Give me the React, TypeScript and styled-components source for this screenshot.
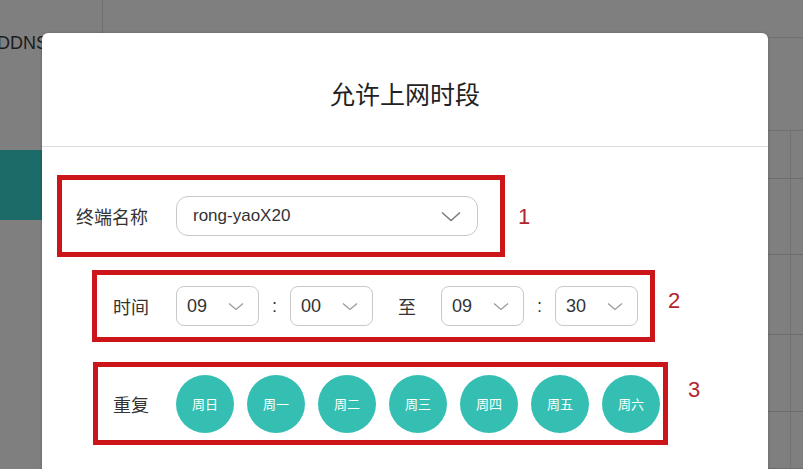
import React from 'react'
import styled, { createGlobalStyle } from 'styled-components'

const GlobalStyle = createGlobalStyle`
    html, body {
        margin: 0;
        padding: 0;
        background: #7f7f7f;
    }
    * {
        box-sizing: border-box;
    }
`;

const Screen = styled.div`
    position: relative;
    width: 803px;
    height: 469px;
    overflow: hidden;
    display: flex;
    background: #7f7f7f;
    font-family: "Liberation Sans", "Noto Sans CJK SC", sans-serif;
`;

const Sidebar = styled.div`
    width: 103px;
    flex-shrink: 0;
    border-right: 1px solid #6e6e6e;
    display: flex;
    flex-direction: column;
    padding-top: 30px;
`;

const NavItem = styled.div<{ $active?: boolean }>`
    height: ${({ $active }) => ($active ? '70px' : '26px')};
    margin-top: ${({ $active }) => ($active ? '94px' : '0')};
    background: ${({ $active }) => ($active ? '#1d6b68' : 'transparent')};
    color: #1c1c1c;
    font-size: 18px;
    line-height: 26px;
    text-indent: -3px;
`;

const Main = styled.div`
    flex: 1;
    display: flex;
    flex-direction: column;
`;

const Band = styled.div<{ $h: number }>`
    height: ${({ $h }) => $h}px;
    border-bottom: 1px solid #717171;
`;

const TableRow = styled.div<{ $h: number }>`
    height: ${({ $h }) => $h}px;
    display: grid;
    grid-template-columns: 1fr 13px;
    border-bottom: 1px solid #6c6c6c;
    > div + div {
        border-left: 1px solid #727272;
    }
`;

const Modal = styled.div`
    position: absolute;
    left: 42px;
    top: 33px;
    width: 726px;
    bottom: -20px;
    background: #fff;
    border-radius: 6px 6px 0 0;
    box-shadow: 0 0 3px rgba(0, 0, 0, 0.25);
    display: flex;
    flex-direction: column;
`;

const Header = styled.div`
    height: 114px;
    flex-shrink: 0;
    display: flex;
    align-items: center;
    justify-content: center;
    padding-top: 6px;
    border-bottom: 1px solid #dcdcdc;
    font-size: 25px;
    color: #222;
`;

const Body = styled.div`
    padding-top: 28px;
    display: flex;
    flex-direction: column;
`;

const FormRow = styled.div<{ $left: number; $top: number }>`
    display: flex;
    align-items: flex-start;
    margin-left: ${({ $left }) => $left}px;
    margin-top: ${({ $top }) => $top}px;
`;

const Highlight = styled.div<{ $w: number; $h: number; $pl: number }>`
    width: ${({ $w }) => $w}px;
    height: ${({ $h }) => $h}px;
    border: 5px solid #cc1519;
    padding-left: ${({ $pl }) => $pl}px;
    display: flex;
    align-items: center;
`;

const Mark = styled.div<{ $gap: number; $top: number }>`
    margin-left: ${({ $gap }) => $gap}px;
    margin-top: ${({ $top }) => $top}px;
    font-size: 22px;
    line-height: 24px;
    color: #b0262f;
`;

const Label = styled.div<{ $w: number }>`
    width: ${({ $w }) => $w}px;
    flex-shrink: 0;
    font-size: 18px;
    color: #333;
`;

const Select = styled.div<{ $w: number; $big?: boolean }>`
    width: ${({ $w }) => $w}px;
    height: 40px;
    flex-shrink: 0;
    border: 1px solid #c9c9c9;
    border-radius: ${({ $big }) => ($big ? '12px' : '8px')};
    padding: ${({ $big }) => ($big ? '0 16px 0 16px' : '0 14px 0 10px')};
    display: flex;
    align-items: center;
    justify-content: space-between;
    font-size: ${({ $big }) => ($big ? '17px' : '18px')};
    color: #333;
`;

const Sep = styled.div<{ $w: number }>`
    width: ${({ $w }) => $w}px;
    flex-shrink: 0;
    text-align: center;
    font-size: 18px;
    color: #333;
`;

const Days = styled.div`
    display: flex;
    gap: 13px;
`;

const Day = styled.div`
    width: 58px;
    height: 58px;
    border-radius: 50%;
    background: #35bfb3;
    color: #fff;
    font-size: 13px;
    display: flex;
    align-items: center;
    justify-content: center;
`;

const Chevron = ({ big }: { big?: boolean }) =>
    big ? (
        <svg width="20" height="11" viewBox="0 0 20 11">
            <path d="M1 1.5 L10 9.5 L19 1.5" fill="none" stroke="#777" strokeWidth="1.4" />
        </svg>
    ) : (
        <svg width="16" height="9" viewBox="0 0 16 9">
            <path d="M1 1.5 L8 7.5 L15 1.5" fill="none" stroke="#9a9a9a" strokeWidth="1.3" />
        </svg>
    );

const TimeSelect = ({ value }: { value: string }) => (
    <Select $w={83}>
        <span>{value}</span>
        <Chevron />
    </Select>
);

const days = ['周日', '周一', '周二', '周三', '周四', '周五', '周六'];

const App = (): JSX.Element => {
    return (
        <>
            <GlobalStyle />
            <Screen>
                <Sidebar>
                    <NavItem>DDNS</NavItem>
                    <NavItem $active />
                </Sidebar>
                <Main>
                    <Band $h={40} />
                    <Band $h={98} />
                    {[50, 80, 84, 81, 60].map((h, i) => (
                        <TableRow key={i} $h={h}>
                            <div />
                            <div />
                        </TableRow>
                    ))}
                </Main>
                <Modal>
                    <Header>允许上网时段</Header>
                    <Body>
                        <FormRow $left={15} $top={0}>
                            <Highlight $w={448} $h={82} $pl={14}>
                                <Label $w={100}>终端名称</Label>
                                <Select $w={302} $big>
                                    <span>rong-yaoX20</span>
                                    <Chevron big />
                                </Select>
                            </Highlight>
                            <Mark $gap={13} $top={30}>1</Mark>
                        </FormRow>
                        <FormRow $left={50} $top={13}>
                            <Highlight $w={563} $h={72} $pl={16}>
                                <Label $w={63}>时间</Label>
                                <TimeSelect value="09" />
                                <Sep $w={31}>:</Sep>
                                <TimeSelect value="00" />
                                <Sep $w={68}>至</Sep>
                                <TimeSelect value="09" />
                                <Sep $w={31}>:</Sep>
                                <TimeSelect value="30" />
                            </Highlight>
                            <Mark $gap={13} $top={19}>2</Mark>
                        </FormRow>
                        <FormRow $left={51} $top={20}>
                            <Highlight $w={575} $h={83} $pl={15}>
                                <Label $w={63}>重复</Label>
                                <Days>
                                    {days.map((d) => (
                                        <Day key={d}>{d}</Day>
                                    ))}
                                </Days>
                            </Highlight>
                            <Mark $gap={20} $top={16}>3</Mark>
                        </FormRow>
                    </Body>
                </Modal>
            </Screen>
        </>
    );
};

export default App
